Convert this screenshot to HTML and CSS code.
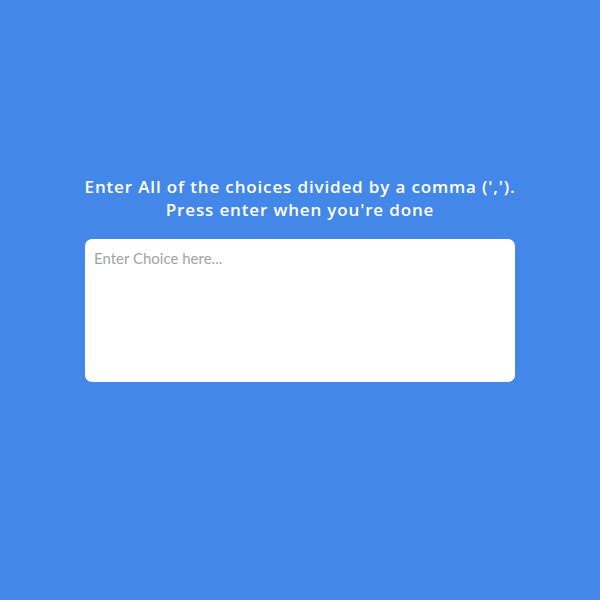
FILE: index.html
```html
<!DOCTYPE html>
<html>
<head>
<meta charset="utf-8">
<link rel="stylesheet" href="styles.css">
</head>
<body>
<main class="page">
  <h1 class="title">Enter All of the choices divided by a comma (',').<br>Press enter when you're done</h1>
  <textarea class="choices" placeholder="Enter Choice here..."></textarea>
</main>
</body>
</html>
```
FILE: styles.css
```css
html, body {
  margin: 0;
  padding: 0;
  width: 600px;
  height: 600px;
  background: #4388e8;
}
.page {
  display: flex;
  flex-direction: column;
  align-items: center;
  padding-top: 175px;
}
.title {
  margin: 0 0 18px;
  font-family: "Open Sans", sans-serif;
  font-weight: 600;
  font-size: 17px;
  line-height: 23px;
  letter-spacing: 0.85px;
  color: #fff;
  text-align: center;
}
.choices {
  box-sizing: border-box;
  width: 430px;
  height: 143px;
  border: none;
  border-radius: 7px;
  padding: 10px 9px;
  font-family: Lato, sans-serif;
  font-size: 15px;
  background: #fff;
  resize: none;
  outline: none;
}
.choices::placeholder {
  color: #a3a3a3;
}
```
